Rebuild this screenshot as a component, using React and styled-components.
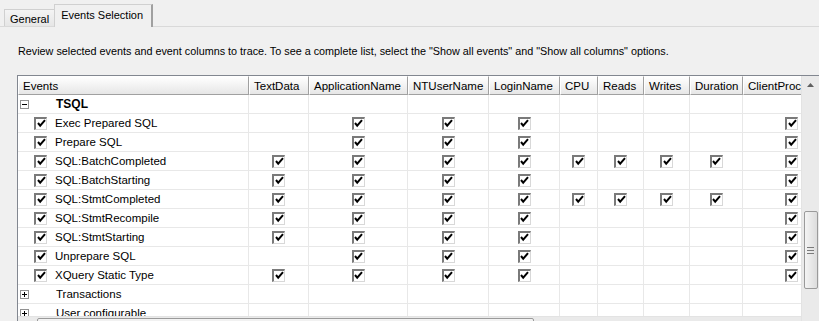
import React from 'react';
import styled, { createGlobalStyle } from 'styled-components';

const GlobalStyle = createGlobalStyle`
  html, body {
    margin: 0;
    padding: 0;
    background: #f0f0f0;
    overflow: hidden;
  }
  body {
    font-family: Tahoma, "Liberation Sans", "DejaVu Sans", sans-serif;
    font-size: 11px;
    color: #000;
  }
`;

const Page = styled.div`
  width: 819px;
  height: 321px;
  overflow: hidden;
  background: #f0f0f0;
`;

const TabStrip = styled.div`
  display: flex;
  align-items: flex-end;
  height: 26px;
  padding-left: 4px;
  border-bottom: 1px solid #d9d9d9;
`;

const Tab = styled.div`
  box-sizing: border-box;
  height: ${(p) => (p.active ? 23 : 17)}px;
  padding: ${(p) => (p.active ? '3px 8px 0 6px' : '2px 5px 0 5px')};
  margin-bottom: ${(p) => (p.active ? -1 : 0)}px;
  background: ${(p) => (p.active ? '#f0f0f0' : 'linear-gradient(#f4f4f4, #e6e6e6)')};
  border: 1px solid #d0d0d0;
  border-bottom: none;
  border-right: ${(p) => (p.active ? '2px solid #a0a0a0' : 'none')};
  line-height: 14px;
  font-size: 11px;
  white-space: nowrap;
`;

const Description = styled.div`
  padding: 17px 0 0 18px;
  height: 48px;
  box-sizing: border-box;
  line-height: 14px;
  font-size: 10.8px;
`;

const Frame = styled.div`
  margin-left: 17px;
  width: 802px;
  height: 262px;
  box-sizing: border-box;
  border: 1px solid #828790;
  border-right: none;
  border-bottom: none;
  display: grid;
  grid-template-columns: 783px 18px;
  grid-template-rows: 240px 20px;
  background: #fff;
`;

const Viewport = styled.div`
  overflow: hidden;
`;

const COLS = '231px 60px 99px 81px 71px 38px 46px 46px 53px 98px';

const Row = styled.div`
  display: grid;
  grid-template-columns: ${COLS};
  height: 19px;
`;

const HeadCell = styled.div`
  box-sizing: border-box;
  height: 19px;
  padding: 2px 0 0 4px;
  background: linear-gradient(#ffffff, #f0f0f0 60%, #e6e6e6);
  border-top: 1px solid #fff;
  border-left: 1px solid #fff;
  border-right: 1px solid #a0a0a0;
  border-bottom: 1px solid #a0a0a0;
  white-space: nowrap;
  overflow: hidden;
  line-height: 15px;
  font-size: 11.5px;
`;

const Cell = styled.div`
  box-sizing: border-box;
  border-right: 1px solid #e8e8e8;
  border-bottom: 1px solid #e8e8e8;
  display: flex;
  align-items: center;
  justify-content: center;
`;

const EventCell = styled(Cell)`
  justify-content: flex-start;
  padding-left: 2px;
  white-space: nowrap;
  overflow: hidden;
`;

const Expander = styled.span`
  box-sizing: border-box;
  width: 9px;
  height: 9px;
  border: 1px solid #919191;
  background: #fff;
  position: relative;
  flex: none;
  &::before {
    content: '';
    position: absolute;
    left: 1px;
    top: 3px;
    width: 5px;
    height: 1px;
    background: #000;
  }
  &::after {
    content: '';
    display: ${(p) => (p.open ? 'none' : 'block')};
    position: absolute;
    left: 3px;
    top: 1px;
    width: 1px;
    height: 5px;
    background: #000;
  }
`;

const Indent = styled.span`
  width: ${(p) => p.w}px;
  flex: none;
`;

const Label = styled.span`
  font-weight: ${(p) => (p.bold ? 'bold' : 'normal')};
  font-size: ${(p) => (p.bold ? 12 : 11.5)}px;
  line-height: 15px;
`;

const Box = styled.span`
  box-sizing: border-box;
  width: 13px;
  height: 13px;
  flex: none;
  background: #fff;
  border-style: solid;
  border-width: 2px 1px 1px 2px;
  border-color: #7a7a7a #d8d8d8 #d8d8d8 #7a7a7a;
  display: flex;
  align-items: center;
  justify-content: center;
`;

const Check = () => (
  <Box>
    <svg width="9" height="9" viewBox="0 0 9 9">
      <path d="M1 4 L3.2 6.6 L8 1.2" fill="none" stroke="#000" strokeWidth="2" />
    </svg>
  </Box>
);

const VScroll = styled.div`
  grid-row: 1 / 3;
  grid-column: 2;
  background: #eaeaea;
  border-left: 1px solid #e3e3e3;
  display: flex;
  flex-direction: column;
  align-items: center;
`;

const Arrow = styled.div`
  height: 17px;
  width: 17px;
  display: flex;
  align-items: center;
  justify-content: center;
  flex: none;
`;

const VThumb = styled.div`
  box-sizing: border-box;
  width: 14px;
  height: 78px;
  margin-top: 118px;
  border: 1px solid #9a9a9a;
  border-radius: 2px;
  background: linear-gradient(90deg, #f4f4f4, #dcdcdc);
  display: flex;
  flex-direction: column;
  align-items: center;
  justify-content: center;
  gap: 2px;
`;

const Grip = styled.span`
  width: ${(p) => (p.v ? 7 : 1)}px;
  height: ${(p) => (p.v ? 1 : 7)}px;
  background: #7a7a7a;
`;

const VSpacer = styled.div`
  flex: 1;
`;

const HScroll = styled.div`
  background: #eaeaea;
  border-top: 1px solid #e3e3e3;
  display: flex;
  align-items: flex-start;
`;

const HThumb = styled.div`
  box-sizing: border-box;
  margin: 1px 0 0 2px;
  width: 497px;
  height: 14px;
  border: 1px solid #9a9a9a;
  border-radius: 2px;
  background: linear-gradient(#f4f4f4, #dcdcdc);
  display: flex;
  justify-content: center;
  align-items: center;
  gap: 2px;
`;

const headers = ['Events', 'TextData', 'ApplicationName', 'NTUserName', 'LoginName', 'CPU', 'Reads', 'Writes', 'Duration', 'ClientProcessID'];

const P = [0, 1, 1, 1, 0, 0, 0, 0, 1];
const T = [1, 1, 1, 1, 0, 0, 0, 0, 1];
const A = [1, 1, 1, 1, 1, 1, 1, 1, 1];
const N = [0, 0, 0, 0, 0, 0, 0, 0, 0];

const rows = [
  { name: 'TSQL', group: true, open: true, cols: N },
  { name: 'Exec Prepared SQL', cols: P },
  { name: 'Prepare SQL', cols: P },
  { name: 'SQL:BatchCompleted', cols: A },
  { name: 'SQL:BatchStarting', cols: T },
  { name: 'SQL:StmtCompleted', cols: A },
  { name: 'SQL:StmtRecompile', cols: T },
  { name: 'SQL:StmtStarting', cols: T },
  { name: 'Unprepare SQL', cols: P },
  { name: 'XQuery Static Type', cols: T },
  { name: 'Transactions', group: true, cols: N },
  { name: 'User configurable', group: true, cols: N },
];

const EventLabel = ({ row }) => {
  if (row.group) {
    return (
      <EventCell>
        <Expander open={row.open} />
        <Indent w={27} />
        <Label bold={row.open}>{row.name}</Label>
      </EventCell>
    );
  }
  return (
    <EventCell>
      <Indent w={14} />
      <Check />
      <Indent w={8} />
      <Label>{row.name}</Label>
    </EventCell>
  );
};

export default function App() {
  return (
    <Page>
      <GlobalStyle />
      <TabStrip>
        <Tab>General</Tab>
        <Tab active>Events Selection</Tab>
      </TabStrip>
      <Description>
        Review selected events and event columns to trace. To see a complete list, select the "Show all events" and "Show all columns" options.
      </Description>
      <Frame>
        <Viewport>
          <Row>
            {headers.map((h) => (
              <HeadCell key={h}>{h}</HeadCell>
            ))}
          </Row>
          {rows.map((r) => (
            <Row key={r.name}>
              <EventLabel row={r} />
              {r.cols.map((c, i) => (
                <Cell key={i}>{c ? <Check /> : null}</Cell>
              ))}
            </Row>
          ))}
        </Viewport>
        <VScroll>
          <Arrow>
            <svg width="7" height="4" viewBox="0 0 7 4"><path d="M0 4 L3.5 0 L7 4 Z" fill="#606060" /></svg>
          </Arrow>
          <VThumb>
            <Grip v />
            <Grip v />
            <Grip v />
          </VThumb>
          <VSpacer />
          <Arrow>
            <svg width="7" height="4" viewBox="0 0 7 4"><path d="M0 0 L7 0 L3.5 4 Z" fill="#606060" /></svg>
          </Arrow>
        </VScroll>
        <HScroll>
          <Arrow>
            <svg width="4" height="7" viewBox="0 0 4 7"><path d="M4 0 L4 7 L0 3.5 Z" fill="#606060" /></svg>
          </Arrow>
          <HThumb>
            <Grip />
            <Grip />
            <Grip />
          </HThumb>
        </HScroll>
      </Frame>
    </Page>
  );
}
